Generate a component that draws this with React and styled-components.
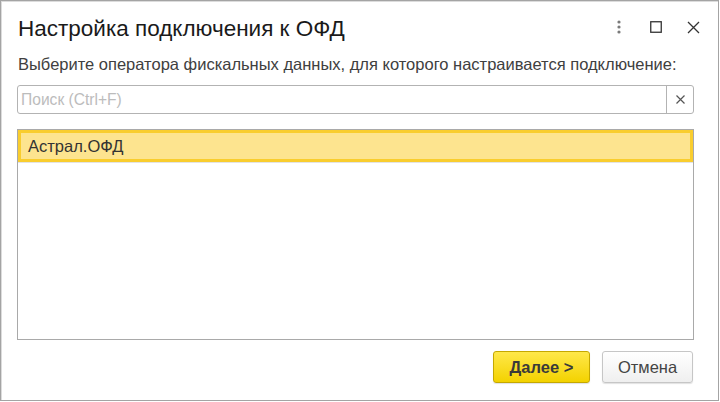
import React, { useState } from "react";
import styled, { createGlobalStyle } from "styled-components";

const GlobalStyle = createGlobalStyle`
  html, body {
    margin: 0;
    padding: 0;
    background: #ffffff;
  }
  body {
    font-family: "Liberation Sans", Arial, sans-serif;
  }
`;

const Window = styled.div`
  box-sizing: border-box;
  width: 719px;
  height: 401px;
  border: 1px solid #a4a4a4;
  box-shadow: inset 1px 1px 0 #dcdcdc;
  background: #ffffff;
  display: flex;
  flex-direction: column;
  padding: 0 24px 17px 16px;
`;

const Header = styled.div`
  display: flex;
  align-items: center;
  height: 26px;
  margin-top: 15px;
`;

const Title = styled.h1`
  margin: 0;
  font-size: 22.5px;
  line-height: 26px;
  font-weight: normal;
  color: #1a1a1a;
  padding-left: 1px;
`;

const WindowTools = styled.div`
  margin-left: auto;
  margin-right: -11px;
  display: flex;
  align-items: center;
  gap: 13px;
  margin-top: -4px;
`;

const ToolButton = styled.button`
  width: 24px;
  height: 24px;
  padding: 0;
  border: none;
  background: transparent;
  display: flex;
  align-items: center;
  justify-content: center;
  cursor: pointer;
`;

const Prompt = styled.div`
  margin-top: 13px;
  font-size: 16.5px;
  line-height: 19px;
  color: #404040;
  padding-left: 1px;
  white-space: nowrap;
`;

const SearchBox = styled.div`
  box-sizing: border-box;
  margin-top: 11px;
  height: 29px;
  display: flex;
  border: 1px solid #b3b3b3;
  border-radius: 3px;
  background: #fff;
`;

const SearchInput = styled.input`
  flex: 1;
  min-width: 0;
  border: none;
  outline: none;
  background: transparent;
  padding: 0 3px;
  font-family: "Liberation Sans", Arial, sans-serif;
  font-size: 15.6px;
  color: #333;

  &::placeholder {
    color: #bcbcbc;
  }
`;

const ClearButton = styled.button`
  width: 27px;
  border: none;
  border-left: 1px solid #b3b3b3;
  background: transparent;
  padding: 0;
  display: flex;
  align-items: center;
  justify-content: center;
  cursor: pointer;
`;

const List = styled.div`
  box-sizing: border-box;
  margin-top: 15px;
  height: 211px;
  border: 1px solid #a9a9a9;
  background: #fff;
`;

const Row = styled.div`
  box-sizing: border-box;
  height: 32px;
  display: flex;
  align-items: center;
  padding-left: 7px;
  font-size: 16.5px;
  color: #333;
  background: ${({ $selected }) => ($selected ? "#fde48f" : "#fff")};
  border: 3px solid ${({ $selected }) => ($selected ? "#f9cd2e" : "transparent")};
  box-shadow: 0 1px 0 #e3e3e3;
  cursor: default;
`;

const Footer = styled.div`
  margin-top: auto;
  display: flex;
  justify-content: flex-end;
  gap: 12px;
  padding-right: 1px;
`;

const Button = styled.button`
  box-sizing: border-box;
  height: 32px;
  min-width: ${({ $primary }) => ($primary ? "97px" : "91px")};
  border-radius: 3px;
  border: 1px solid ${({ $primary }) => ($primary ? "#c5a800" : "#c6c6c6")};
  background: ${({ $primary }) =>
    $primary
      ? "linear-gradient(#ffe84a, #f3d200)"
      : "linear-gradient(#ffffff, #efefef)"};
  box-shadow: 0 1px 1px rgba(0, 0, 0, 0.12);
  font-family: "Liberation Sans", Arial, sans-serif;
  font-size: 16.5px;
  font-weight: ${({ $primary }) => ($primary ? "bold" : "normal")};
  color: ${({ $primary }) => ($primary ? "#3a3a3a" : "#444")};
  padding: 0 12px;
  cursor: pointer;
`;

const operators = ["Астрал.ОФД"];

export default function App() {
  const [query, setQuery] = useState("");
  const [selected, setSelected] = useState(0);

  return (
    <>
      <GlobalStyle />
      <Window>
        <Header>
          <Title>Настройка подключения к ОФД</Title>
          <WindowTools>
            <ToolButton title="Ещё">
              <svg width="4" height="14" viewBox="0 0 4 14">
                <circle cx="2" cy="2" r="1.6" fill="#7a7a7a" />
                <circle cx="2" cy="7" r="1.6" fill="#7a7a7a" />
                <circle cx="2" cy="12" r="1.6" fill="#7a7a7a" />
              </svg>
            </ToolButton>
            <ToolButton title="Развернуть">
              <svg width="12" height="12" viewBox="0 0 12 12">
                <rect x="0.75" y="0.75" width="10.5" height="10.5" fill="none" stroke="#333" strokeWidth="1.3" />
              </svg>
            </ToolButton>
            <ToolButton title="Закрыть">
              <svg width="13" height="13" viewBox="0 0 13 13">
                <path d="M1 1 L12 12 M12 1 L1 12" stroke="#333" strokeWidth="1.3" />
              </svg>
            </ToolButton>
          </WindowTools>
        </Header>

        <Prompt>Выберите оператора фискальных данных, для которого настраивается подключение:</Prompt>

        <SearchBox>
          <SearchInput
            placeholder="Поиск (Ctrl+F)"
            value={query}
            onChange={(e) => setQuery(e.target.value)}
          />
          <ClearButton onClick={() => setQuery("")}>
            <svg width="9" height="9" viewBox="0 0 9 9">
              <path d="M0.5 0.5 L8.5 8.5 M8.5 0.5 L0.5 8.5" stroke="#555" strokeWidth="1.2" />
            </svg>
          </ClearButton>
        </SearchBox>

        <List>
          {operators
            .filter((o) => o.toLowerCase().includes(query.toLowerCase()))
            .map((o, i) => (
              <Row key={o} $selected={i === selected} onClick={() => setSelected(i)}>
                {o}
              </Row>
            ))}
        </List>

        <Footer>
          <Button $primary>Далее &gt;</Button>
          <Button>Отмена</Button>
        </Footer>
      </Window>
    </>
  );
}
